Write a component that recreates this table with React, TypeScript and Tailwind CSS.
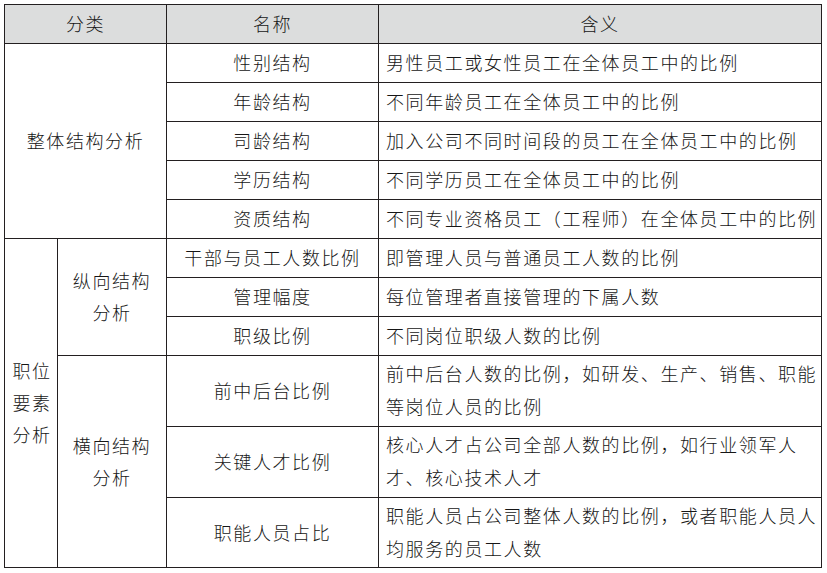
import React from "react";

type Row = { row: string; name: string; desc: string[] };

// row classes are spelled out so tailwind picks them up
const rows: Row[] = [
  { row: "row-start-2", name: "性别结构", desc: ["男性员工或女性员工在全体员工中的比例"] },
  { row: "row-start-3", name: "年龄结构", desc: ["不同年龄员工在全体员工中的比例"] },
  { row: "row-start-4", name: "司龄结构", desc: ["加入公司不同时间段的员工在全体员工中的比例"] },
  { row: "row-start-5", name: "学历结构", desc: ["不同学历员工在全体员工中的比例"] },
  { row: "row-start-6", name: "资质结构", desc: ["不同专业资格员工（工程师）在全体员工中的比例"] },
  { row: "row-start-7", name: "干部与员工人数比例", desc: ["即管理人员与普通员工人数的比例"] },
  { row: "row-start-8", name: "管理幅度", desc: ["每位管理者直接管理的下属人数"] },
  { row: "row-start-9", name: "职级比例", desc: ["不同岗位职级人数的比例"] },
  { row: "row-start-10", name: "前中后台比例", desc: ["前中后台人数的比例，如研发、生产、销售、职能", "等岗位人员的比例"] },
  { row: "row-start-11", name: "关键人才比例", desc: ["核心人才占公司全部人数的比例，如行业领军人", "才、核心技术人才"] },
  { row: "row-start-12", name: "职能人员占比", desc: ["职能人员占公司整体人数的比例，或者职能人员人", "均服务的员工人数"] },
];

const cell = "flex items-center justify-center bg-white pb-[2px] text-center";

export default function App() {
  return (
    <div className="h-[573px] w-[827px] bg-white pl-[4px] pt-[4px] text-[18px] font-light leading-[32px] tracking-[1.6px] text-[#161616]" style={{ fontFamily: '"Noto Sans CJK SC", "Noto Sans", sans-serif' }}>
      <div className="grid w-[818px] grid-cols-[52px_108px_211px_442px] grid-rows-[38px_repeat(8,38px)_70px_70px_69px] gap-px bg-[#231f20] p-px">
        {/* header */}
        <div className="col-span-2 col-start-1 row-start-1 flex items-center justify-center bg-[#dcdddd] pb-[2px]">分类</div>
        <div className="col-start-3 row-start-1 flex items-center justify-center bg-[#dcdddd] pb-[2px]">名称</div>
        <div className="col-start-4 row-start-1 flex items-center justify-center bg-[#dcdddd] pb-[2px]">含义</div>

        {/* category cells */}
        <div className={`${cell} col-span-2 col-start-1 row-span-5 row-start-2`}>整体结构分析</div>
        <div className={`${cell} col-start-1 row-span-6 row-start-7 pl-[2px]`}>
          <span>职位<br />要素<br />分析</span>
        </div>
        <div className={`${cell} col-start-2 row-span-3 row-start-7`}>
          <span>纵向结构<br />分析</span>
        </div>
        <div className={`${cell} col-start-2 row-span-3 row-start-10`}>
          <span>横向结构<br />分析</span>
        </div>

        {rows.map((r) => (
          <React.Fragment key={r.name}>
            <div className={`${cell} col-start-3 ${r.row}`}>{r.name}</div>
            <div className={`col-start-4 ${r.row} flex flex-col justify-center bg-white pb-[2px] pl-[7px] ${r.desc.length > 1 ? "leading-[33px]" : ""}`}>
              {r.desc.map((l) => (
                <span key={l} className="whitespace-nowrap">{l}</span>
              ))}
            </div>
          </React.Fragment>
        ))}
      </div>
    </div>
  );
}
